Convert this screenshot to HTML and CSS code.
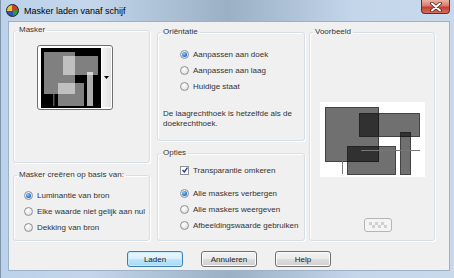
FILE: index.html
```html
<!DOCTYPE html>
<html lang="nl">
<head>
    <meta charset="UTF-8">
    <title>Masker laden vanaf schijf</title>
    <link rel="stylesheet" href="styles.css">
</head>
<body>
    <div class="window">
        <div class="titlebar">
            <span class="app-icon"></span>
            <span class="title">Masker laden vanaf schijf</span>
            <span class="close-btn">
                <svg width="14" height="10" viewBox="0 0 14 10">
                    <path d="M3 1.5 L11 8.5 M11 1.5 L3 8.5" stroke="#5a1f1a" stroke-width="3.6" stroke-linecap="round"/>
                    <path d="M3 1.5 L11 8.5 M11 1.5 L3 8.5" stroke="#fff" stroke-width="2" stroke-linecap="round"/>
                </svg>
            </span>
        </div>

        <div class="client">
            <div class="panes">
                <div class="col col-left">
                    <fieldset class="group group-mask">
                        <legend>Masker</legend>
                        <div class="mask-picker">
                            <svg class="mask-thumb" width="60" height="60" viewBox="0 0 60 60">
                                <rect width="60" height="60" fill="#000"/>
                                <rect x="3" y="4" width="31" height="42" fill="#fff" fill-opacity="0.5"/>
                                <rect x="22" y="8" width="35" height="19" fill="#fff" fill-opacity="0.5"/>
                                <rect x="17" y="35" width="26" height="23" fill="#fff" fill-opacity="0.5"/>
                                <rect x="46" y="24" width="6" height="34" fill="#fff" fill-opacity="0.68"/>
                                <rect x="12" y="46" width="1.5" height="12" fill="#555"/>
                            </svg>
                            <span class="picker-side">
                                <svg width="5" height="3" viewBox="0 0 5 3"><path d="M0 0 H5 L2.5 3 Z" fill="#000"/></svg>
                            </span>
                        </div>
                    </fieldset>

                    <fieldset class="group group-source">
                        <legend>Masker creëren op basis van:</legend>
                        <div class="opts opts-source">
                            <div class="opt"><span class="radio checked"></span>Luminantie van bron</div>
                            <div class="opt"><span class="radio"></span>Elke waarde niet gelijk aan nul</div>
                            <div class="opt"><span class="radio"></span>Dekking van bron</div>
                        </div>
                    </fieldset>
                </div>

                <div class="col col-mid">
                    <fieldset class="group group-orient">
                        <legend>Oriëntatie</legend>
                        <div class="opts opts-orient">
                            <div class="opt"><span class="radio checked"></span>Aanpassen aan doek</div>
                            <div class="opt"><span class="radio"></span>Aanpassen aan laag</div>
                            <div class="opt"><span class="radio"></span>Huidige staat</div>
                        </div>
                        <p class="note">De laagrechthoek is hetzelfde als de doekrechthoek.</p>
                    </fieldset>

                    <fieldset class="group group-options">
                        <legend>Opties</legend>
                        <div class="opts opts-options">
                            <div class="opt opt-check">
                                <span class="checkbox">
                                    <svg width="6" height="6" viewBox="0 0 6 6"><path d="M0.5 3 L2.3 5 L5.5 0.6" fill="none" stroke="#1e3f9a" stroke-width="1.4"/></svg>
                                </span>Transparantie omkeren
                            </div>
                            <div class="opt"><span class="radio checked"></span>Alle maskers verbergen</div>
                            <div class="opt"><span class="radio"></span>Alle maskers weergeven</div>
                            <div class="opt"><span class="radio"></span>Afbeeldingswaarde gebruiken</div>
                        </div>
                    </fieldset>
                </div>

                <div class="col col-right">
                    <fieldset class="group group-preview">
                        <legend>Voorbeeld</legend>
                        <svg class="preview" width="105" height="75" viewBox="0 0 105 75">
                            <rect width="105" height="75" fill="#fff"/>
                            <g fill="#000" fill-opacity="0.56" stroke="#111" stroke-opacity="0.7" stroke-width="1">
                                <rect x="5.5" y="5.5" width="53" height="54"/>
                                <rect x="39.5" y="11.5" width="60" height="23"/>
                                <rect x="27.5" y="44.5" width="48" height="28"/>
                                <rect x="80.5" y="30.5" width="10" height="42"/>
                            </g>
                            <path d="M41 48.5 H100 M22.5 59 V72" stroke="#777" stroke-width="1"/>
                        </svg>
                        <span class="mini-btn">
                            <svg width="18" height="6" viewBox="0 0 18 6">
                                <g fill="#d0d0d0">
                                    <rect x="0" y="0" width="3" height="3"/><rect x="6" y="0" width="3" height="3"/>
                                    <rect x="12" y="0" width="3" height="3"/><rect x="3" y="3" width="3" height="3"/>
                                    <rect x="9" y="3" width="3" height="3"/><rect x="15" y="3" width="3" height="3"/>
                                </g>
                            </svg>
                        </span>
                    </fieldset>
                </div>
            </div>

            <div class="buttons">
                <button type="button" class="btn btn-default">Laden</button>
                <button type="button" class="btn">Annuleren</button>
                <button type="button" class="btn">Help</button>
            </div>
        </div>
    </div>
</body>
</html>
```

FILE: styles.css
```css
body {
    margin: 0;
    background: #fff;
    font-family: "Liberation Sans", Arial, sans-serif;
    font-size: 8px;
    color: #333;
}

.window {
    width: 454px;
    height: 278px;
    box-sizing: border-box;
    padding: 0 4px 7px 7px;
    display: flex;
    flex-direction: column;
    background: linear-gradient(90deg, #bcd2ea 0%, #c3d6ea 20%, #aec2d8 35%, #9bafc5 50%, #abbfd5 62%, #c4d6ea 78%, #c8d9ec 100%);
    border-left: 1px solid #7f93aa;
}

.titlebar {
    height: 21px;
    display: flex;
    align-items: center;
    flex-shrink: 0;
}

.app-icon {
    width: 11px;
    height: 11px;
    margin-left: -2px;
    border-radius: 50%;
    border: 1px solid #222;
    background: conic-gradient(#d23a2a 0 25%, #2a9a3a 0 50%, #2a4ec8 0 75%, #e8c830 0);
}

.title {
    margin-left: 5px;
    font-size: 9px;
    color: #000;
}

.close-btn {
    margin-left: auto;
    align-self: flex-start;
    width: 29px;
    height: 14px;
    box-sizing: border-box;
    border: 1px solid #6b2a26;
    border-top: none;
    border-radius: 0 0 4px 4px;
    background: linear-gradient(#e9b2a4 0%, #d87c6b 45%, #c43e30 55%, #d3705c 100%);
    display: flex;
    align-items: center;
    justify-content: center;
}

.client {
    flex: 1;
    background: #f0f0f0;
    border: 1px solid #9cb0c6;
    display: flex;
    flex-direction: column;
}

.panes {
    display: flex;
    padding-left: 4px;
}

.col {
    display: flex;
    flex-direction: column;
    gap: 7px;
}

.col-left {
    width: 137px;
    margin-top: 3px;
}

.col-mid {
    width: 148px;
    margin-top: 5px;
    margin-left: 7px;
}

.col-right {
    width: 126px;
    margin-top: 5px;
    margin-left: 4px;
}

.group {
    margin: 0;
    padding: 0;
    box-sizing: border-box;
    min-width: 0;
    border: 1px solid #d5dfe5;
    border-radius: 3px;
    box-shadow: inset 1px 1px 0 #fff, 1px 1px 0 #fff;
}

.group legend {
    margin-left: 3px;
    padding: 0 2px;
    line-height: 10px;
    color: #333;
}

.group-mask {
    height: 138px;
}

.group-source {
    height: 71px;
}

.group-orient {
    height: 114px;
}

.group-options {
    height: 93px;
}

.group-preview {
    height: 214px;
    display: flex;
    flex-direction: column;
}

.opts-source {
    padding: 7px 0 0 10px;
}

.opts-orient {
    padding: 9px 0 0 22px;
}

.opts-options {
    padding: 4px 0 0 22px;
}

.opt {
    height: 16px;
    display: flex;
    align-items: center;
    gap: 4px;
    white-space: nowrap;
}

.opt-check {
    margin-bottom: 7px;
}

.radio {
    width: 7px;
    height: 7px;
    flex-shrink: 0;
    border-radius: 50%;
    border: 1px solid #8e9297;
    background: radial-gradient(circle at 40% 35%, #fff 0%, #e6e6e6 60%, #cfd2d5 100%);
    display: flex;
    align-items: center;
    justify-content: center;
}

.radio.checked::after {
    content: "";
    width: 5px;
    height: 5px;
    border-radius: 50%;
    background: radial-gradient(circle at 40% 35%, #8fd2ff 0%, #2b7ed8 55%, #163e8a 100%);
}

.checkbox {
    width: 7px;
    height: 7px;
    flex-shrink: 0;
    border: 1px solid #8e9297;
    background: #fff;
    display: flex;
    align-items: center;
    justify-content: center;
}

.note {
    margin: 15px 0 0 5px;
    width: 138px;
    line-height: 10px;
}

.mask-picker {
    width: 76px;
    height: 65px;
    box-sizing: border-box;
    margin: 10px 0 0 23px;
    border: 1px solid #6f6f6f;
    border-radius: 3px;
    background: #fff;
    box-shadow: inset 0 0 0 1px #fff;
    display: flex;
}

.mask-thumb {
    display: block;
    margin: 2px 0 0 3px;
}

.picker-side {
    flex: 1;
    margin: 2px 1px;
    background: linear-gradient(90deg, #f4f4f4, #e2e2e2);
    display: flex;
    align-items: center;
    justify-content: center;
}

.picker-side svg {
    display: block;
}

.preview {
    display: block;
    margin: 65px 0 0 10px;
}

.mini-btn {
    width: 28px;
    height: 14px;
    box-sizing: border-box;
    margin: 41px 0 0 54px;
    border: 1px solid #b5b5b5;
    border-radius: 3px;
    background: #f4f4f4;
    display: flex;
    align-items: center;
    justify-content: center;
}

.buttons {
    display: flex;
    justify-content: center;
    gap: 18px;
    margin-top: 10px;
}

.btn {
    width: 56px;
    height: 16px;
    padding: 0;
    font-family: "Liberation Sans", Arial, sans-serif;
    font-size: 8px;
    color: #222;
    border: 1px solid #707070;
    border-radius: 3px;
    background: linear-gradient(#f2f2f2 0%, #ebebeb 50%, #dddddd 51%, #cfcfcf 100%);
    box-shadow: inset 0 0 0 1px #fcfcfc;
}

.btn-default {
    border-color: #3c7fb1;
    background: linear-gradient(#eaf6fd 0%, #d9f0fc 50%, #bee6fd 51%, #a7d9f5 100%);
    box-shadow: inset 0 0 0 1px #c6e9fb;
}
```
